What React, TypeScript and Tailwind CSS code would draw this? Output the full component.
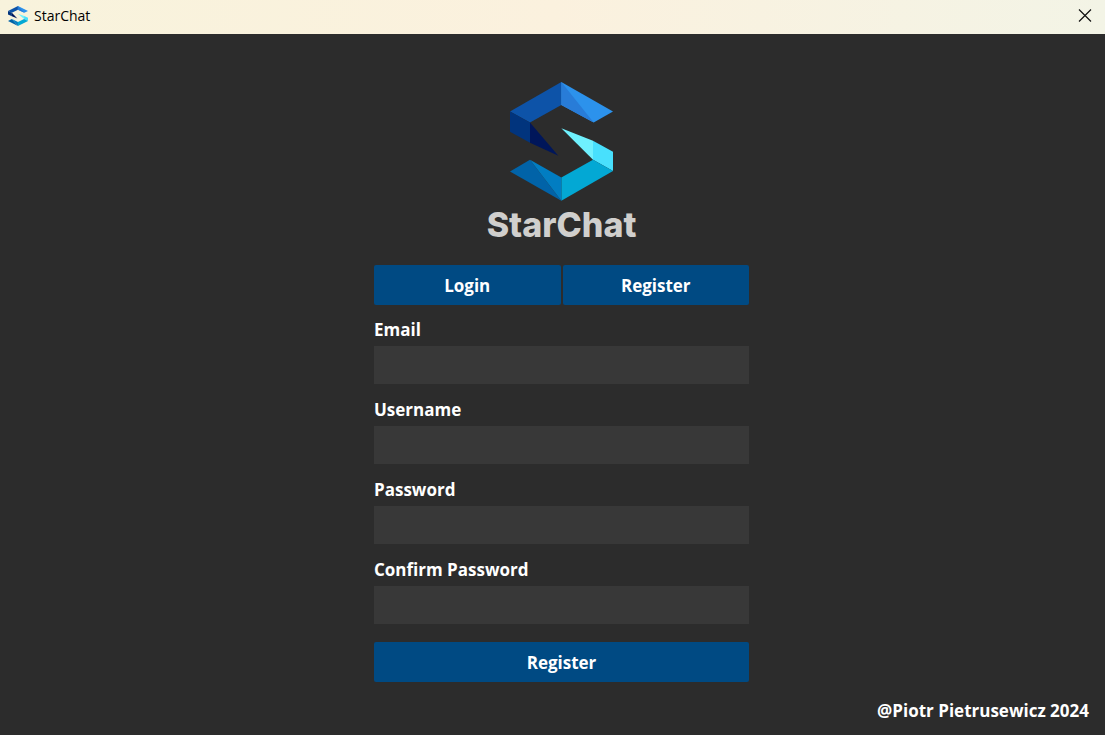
import { useState } from "react";

type LogoProps = { className?: string };

function Logo({ className }: LogoProps) {
  return (
    <svg viewBox="30 21 309 358" preserveAspectRatio="none" className={className} aria-hidden="true">
      <polygon points="30,110 184,21 184,90 90,143" fill="#0d53a8" />
      <polygon points="184,21 339,110 281,143 184,90" fill="#2c92ec" />
      <polygon points="184,21 281,143 184,90" fill="#287cd8" />
      <polygon points="30,110 90,143 90,204 30,171" fill="#01347d" />
      <polygon points="90,143 175,243 90,204" fill="#00165a" />
      <polygon points="184,160 279,198 279,255" fill="#6ff1fe" />
      <polygon points="279,198 339,231 339,289 279,255" fill="#48e0fd" />
      <polygon points="279,255 339,289 184,378 184,308" fill="#03a8d4" />
      <polygon points="30,290 90,255 184,378" fill="#0163a8" />
      <polygon points="90,255 184,308 184,378" fill="#017dc2" />
    </svg>
  );
}

const fields = [
  { id: "email", label: "Email", type: "email" },
  { id: "username", label: "Username", type: "text" },
  { id: "password", label: "Password", type: "password" },
  { id: "confirm-password", label: "Confirm Password", type: "password" },
];

export default function App() {
  const [values, setValues] = useState<Record<string, string>>({});

  return (
    <div className="flex min-h-screen flex-col bg-[#2c2c2c] font-['Open_Sans','Noto_Sans',sans-serif] text-white">
      <header className="flex h-[34px] items-center justify-between bg-linear-to-r from-[#f8f3dc] via-[#fbf1de] to-[#f3f4e6] pr-3 pl-2 text-black">
        <div className="flex items-center gap-1.5 pb-0.5">
          <Logo className="h-5 w-5" />
          <span className="text-sm leading-5">StarChat</span>
        </div>
        <button type="button" aria-label="Close" className="pb-1">
          <svg viewBox="0 0 16 16" className="size-4" fill="none" stroke="#111" strokeWidth="1.2">
            <path d="M2 2.5 L14 14.5 M14 2.5 L2 14.5" />
          </svg>
        </button>
      </header>

      <main className="ml-[18px] flex flex-col items-center px-4 pt-12">
        <Logo className="h-[119px] w-[103px]" />
        <h1 className="mt-1 font-['Inter',sans-serif] text-[34px] leading-10 font-extrabold text-[#d0cfcd]">
          StarChat
        </h1>

        <form className="mt-5 w-full max-w-[375px]" onSubmit={(e) => e.preventDefault()}>
          <div className="grid grid-cols-2 gap-0.5">
            <button type="button" className="h-10 rounded-xs bg-[#004a83] pt-0.5 text-[17px] font-bold">
              Login
            </button>
            <button type="button" className="h-10 rounded-xs bg-[#004a83] pt-0.5 text-[17px] font-bold">
              Register
            </button>
          </div>

          <div className="mt-[11px] flex flex-col gap-3">
            {fields.map((f) => (
              <div key={f.id} className="flex flex-col gap-0.5">
                <label htmlFor={f.id} className="text-[17px] leading-7 font-bold">
                  {f.label}
                </label>
                <input
                  id={f.id}
                  type={f.type}
                  value={values[f.id] ?? ""}
                  onChange={(e) => setValues({ ...values, [f.id]: e.target.value })}
                  className="h-[38px] w-full bg-[#383838] px-2 text-base outline-none"
                />
              </div>
            ))}
          </div>

          <button type="submit" className="mt-[18px] h-10 w-full rounded-xs bg-[#004a83] pt-0.5 text-[17px] font-bold">
            Register
          </button>
        </form>
      </main>

      <footer className="mt-auto px-4 pb-3 text-right text-[17px] leading-6 font-bold">
        @Piotr Pietrusewicz 2024
      </footer>
    </div>
  );
}
